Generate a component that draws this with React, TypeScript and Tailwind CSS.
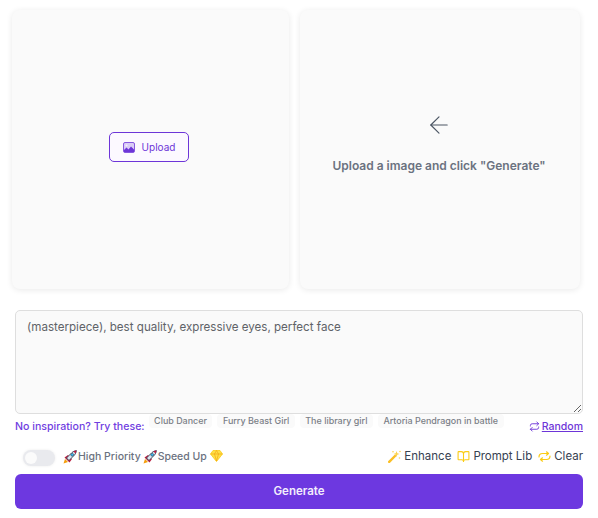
import { ArrowLeft, BookOpen, Repeat } from "lucide-react";

function Rocket() {
  return (
    <svg width="14" height="14" viewBox="0 0 14 14" className="shrink-0">
      <path d="M0.5 13.5 L2 9 L5 12 Z" fill="#f59e0b" />
      <path d="M1.5 7.5 L5 5 L9 9 L6.5 12.5 Z" fill="#b91c3c" />
      <path d="M3.5 8 L9 2.5 C10.5 1.3 12.2 0.7 13.4 0.6 C13.3 1.9 12.7 3.5 11.5 5 L6 10.5 Z" fill="#dbe7f0" stroke="#334155" strokeWidth="0.9" />
      <circle cx="9.2" cy="4.8" r="1.4" fill="#38bdf8" stroke="#334155" strokeWidth="0.6" />
      <path d="M10.5 1.6 C11.5 1 12.6 0.7 13.4 0.6 C13.3 1.4 13 2.5 12.4 3.5 Z" fill="#be123c" />
    </svg>
  );
}

function Diamond() {
  return (
    <svg width="13" height="12" viewBox="0 0 13 12" className="shrink-0">
      <path d="M3 0.5 H10 L12.5 4 L6.5 11.5 L0.5 4 Z" fill="#fde047" stroke="#facc15" strokeWidth="0.8" />
      <path d="M0.5 4 H12.5 M4.5 4 L6.5 11 L8.5 4 L6.5 0.5 L4.5 4" fill="none" stroke="#f59e0b" strokeWidth="0.6" />
    </svg>
  );
}

function UploadIcon() {
  return (
    <svg width="12" height="11" viewBox="0 0 12 11" className="shrink-0">
      <rect x="0.5" y="0.5" width="11" height="10" rx="1.5" fill="#d9ccf6" stroke="#6d35d8" strokeWidth="0.8" />
      <circle cx="3.5" cy="3.5" r="1" fill="#f4effd" />
      <path d="M1 10 V8 L3.5 5.5 L5.5 7.5 L8 4.5 L11 7.5 V10 Z" fill="#6d35d8" />
    </svg>
  );
}

function Wand() {
  return (
    <svg width="13" height="13" viewBox="0 0 13 13" className="shrink-0">
      <path d="M1.2 11.8 L7 6" stroke="#fbbf24" strokeWidth="2.4" strokeLinecap="round" />
      <path d="M8.5 1 L9.3 3.2 L11.5 4 L9.3 4.8 L8.5 7 L7.7 4.8 L5.5 4 L7.7 3.2 Z" fill="#fcd34d" />
      <circle cx="5" cy="1.8" r="0.8" fill="#fcd34d" />
      <circle cx="12" cy="1.5" r="0.8" fill="#fcd34d" />
      <circle cx="11.5" cy="8" r="0.8" fill="#fcd34d" />
    </svg>
  );
}

function LoopIcon() {
  return (
    <svg width="13" height="11" viewBox="0 0 13 11" fill="none" className="shrink-0" stroke="#facc15" strokeWidth="1.2" strokeLinecap="round" strokeLinejoin="round">
      <path d="M1 6 C1 3.6 2.6 2.5 4.5 2.5 H10" />
      <path d="M8.5 0.8 L10.5 2.5 L8.5 4.2" />
      <path d="M12 5 C12 7.4 10.4 8.5 8.5 8.5 H3" />
      <path d="M4.5 6.8 L2.5 8.5 L4.5 10.2" />
    </svg>
  );
}

const suggestions = ["Club Dancer", "Furry Beast Girl", "The library girl", "Artoria Pendragon in battle"];

export default function App() {
  return (
    <div className="w-[598px] h-[518px] bg-white font-['Inter',sans-serif] overflow-hidden">
      {/* Image panels */}
      <div className="flex gap-[11px] pl-3 pr-[18px] pt-[10px]">
        <div className="w-[277px] h-[279px] rounded-lg bg-[#fafafa] shadow-[0_1px_6px_rgba(0,0,0,0.09)] flex items-center justify-center pb-[5px] pr-[3px]">
          <button className="w-20 h-[30px] rounded-[5px] border border-[#6d35d8] bg-[#fcf9ff] flex items-center justify-center gap-[7px] text-[10px] text-[#6d35d8]">
            <UploadIcon />
            Upload
          </button>
        </div>
        <div className="w-[280px] h-[279px] rounded-lg bg-[#fafafa] shadow-[0_1px_6px_rgba(0,0,0,0.09)] flex flex-col items-center pt-[101px] pr-[2px]">
          <ArrowLeft size={28} strokeWidth={1} className="text-[#4b5563]" />
          <p className="mt-[19px] text-xs font-semibold text-[#6b7280]">Upload a image and click "Generate"</p>
        </div>
      </div>

      <div className="pl-[15px] pr-[15px] pt-[21px]">
        <textarea
          className="block w-[568px] h-[104px] rounded-[5px] border border-[#dedede] bg-[#fafafa] pl-[11px] pr-3 py-[8px] text-[11.6px] leading-[16px] text-[#5f6368]"
          defaultValue="(masterpiece), best quality, expressive eyes, perfect face"
        />

        {/* Suggestions */}
        <div className="flex items-start h-[30px] w-[568px]">
          <span className="mt-[5px] text-[10.6px] font-medium text-[#7040df] whitespace-nowrap">No inspiration? Try these:</span>
          <div className="ml-[4px] flex gap-[5px]">
            {suggestions.map((s) => (
              <span key={s} className="h-[14px] px-[5.5px] rounded bg-[#fafafa] text-[8.95px] leading-[14px] font-medium text-[#7b7f87] whitespace-nowrap">
                {s}
              </span>
            ))}
          </div>
          <a href="#" className="ml-auto mt-[5px] flex items-center gap-[2px] text-[10.5px] font-medium text-[#6d35d8] underline whitespace-nowrap">
            <Repeat size={11} strokeWidth={2} />
            Random
          </a>
        </div>

        {/* Options */}
        <div className="flex items-center justify-between h-[30px] w-[568px] pb-[5px]">
          <div className="flex items-center pl-2">
            <span className="w-8 h-[16px] rounded-full bg-[#e9eaee] shadow-[0_0_3px_rgba(0,0,0,0.08)] flex items-center px-[2px] mr-[8px] mt-[2px]">
              <span className="w-3 h-3 rounded-full bg-[#fbfbfb]" />
            </span>
            <span className="flex items-center gap-px text-[10.5px] font-medium text-[#6b7280] mr-[2px]">
              <Rocket />
              High Priority
            </span>
            <span className="flex items-center gap-px text-[10.5px] font-medium text-[#6b7280]">
              <Rocket />
              Speed Up
              <span className="ml-[2px] -mt-[2px]"><Diamond /></span>
            </span>
          </div>
          <div className="flex items-center gap-[6px] text-[11.5px] text-[#374151]">
            <span className="flex items-center gap-[3px]">
              <Wand />
              Enhance
            </span>
            <span className="flex items-center gap-[3px]">
              <BookOpen size={13} className="text-[#facc15]" />
              Prompt Lib
            </span>
            <span className="flex items-center gap-[3px]">
              <LoopIcon />
              Clear
            </span>
          </div>
        </div>

        <button className="block w-[568px] h-[35px] rounded-md bg-[#6d38e0] text-[11.5px] font-semibold text-[#f3eefc]">
          Generate
        </button>
      </div>
    </div>
  );
}
